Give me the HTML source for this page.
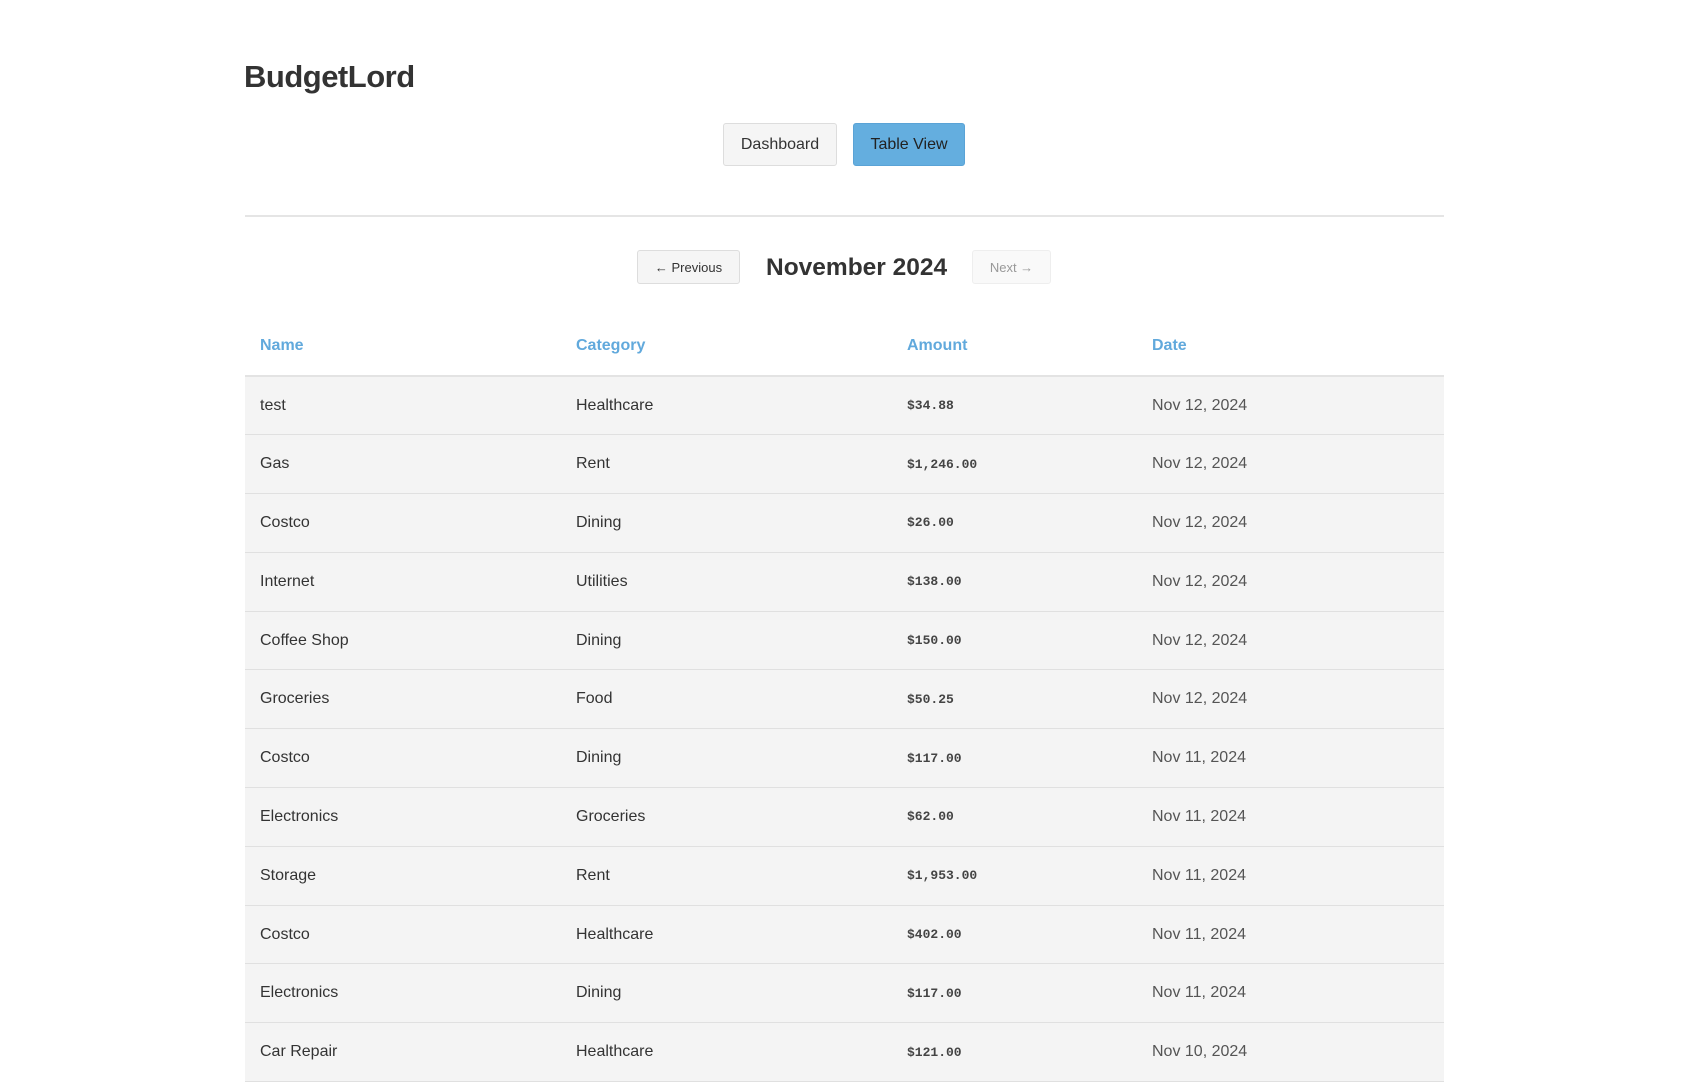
<!DOCTYPE html>
<html><head><meta charset="utf-8"><style>
*{box-sizing:border-box;margin:0;padding:0}
body{width:1689px;height:1071px;overflow:hidden;background:#fff;font-family:"Liberation Sans",sans-serif;color:#333;position:relative}
.a{position:absolute}
h1{position:absolute;left:244px;top:59px;font-size:31px;font-weight:bold;color:#333;letter-spacing:-0.5px}
.btn{position:absolute;border:1px solid #ddd;border-radius:3px;background:#f5f5f5;font-size:16px;display:flex;align-items:center;justify-content:center;color:#333}
.hr{position:absolute;left:245px;width:1199px;top:215px;height:2px;background:#e5e5e5}
table{position:absolute;left:245px;top:316px;width:1199px;border-collapse:collapse}
th{text-align:left;color:#61a9dc;font-size:16px;font-weight:bold;height:60px;padding-left:15px;border-bottom:2px solid #e3e3e3}
td{height:58.8px;background:#f4f4f4;border-bottom:1px solid #e0e0e0;font-size:16px;padding-left:15px;color:#333}
td.m{font-family:"Liberation Mono",monospace;font-size:13px;color:#444;font-weight:bold}
td.d{color:#555}
</style></head><body>
<h1>BudgetLord</h1>
<div class="btn" style="left:723px;top:123px;width:114px;height:43px">Dashboard</div>
<div class="btn" style="left:853px;top:123px;width:112px;height:43px;background:#64aedf;border-color:#5aa3d6;color:#222">Table View</div>
<div class="hr"></div>
<div class="btn" style="left:637px;top:250px;width:103px;height:34px;font-size:13px">← Previous</div>
<div class="a" style="left:766px;top:254px;width:182px;font-size:24.5px;font-weight:bold;white-space:nowrap">November 2024</div>
<div class="btn" style="left:972px;top:250px;width:79px;height:34px;font-size:13px;color:#999;background:#f9f9f9;border-color:#eee">Next →</div>
<table>
<colgroup><col style="width:316px"><col style="width:331px"><col style="width:245px"><col></colgroup>
<tr><th>Name</th><th>Category</th><th>Amount</th><th>Date</th></tr>
<tr><td>test</td><td>Healthcare</td><td class="m">$34.88</td><td class="d">Nov 12, 2024</td></tr>
<tr><td>Gas</td><td>Rent</td><td class="m">$1,246.00</td><td class="d">Nov 12, 2024</td></tr>
<tr><td>Costco</td><td>Dining</td><td class="m">$26.00</td><td class="d">Nov 12, 2024</td></tr>
<tr><td>Internet</td><td>Utilities</td><td class="m">$138.00</td><td class="d">Nov 12, 2024</td></tr>
<tr><td>Coffee Shop</td><td>Dining</td><td class="m">$150.00</td><td class="d">Nov 12, 2024</td></tr>
<tr><td>Groceries</td><td>Food</td><td class="m">$50.25</td><td class="d">Nov 12, 2024</td></tr>
<tr><td>Costco</td><td>Dining</td><td class="m">$117.00</td><td class="d">Nov 11, 2024</td></tr>
<tr><td>Electronics</td><td>Groceries</td><td class="m">$62.00</td><td class="d">Nov 11, 2024</td></tr>
<tr><td>Storage</td><td>Rent</td><td class="m">$1,953.00</td><td class="d">Nov 11, 2024</td></tr>
<tr><td>Costco</td><td>Healthcare</td><td class="m">$402.00</td><td class="d">Nov 11, 2024</td></tr>
<tr><td>Electronics</td><td>Dining</td><td class="m">$117.00</td><td class="d">Nov 11, 2024</td></tr>
<tr><td>Car Repair</td><td>Healthcare</td><td class="m">$121.00</td><td class="d">Nov 10, 2024</td></tr>
</table>
</body></html>
